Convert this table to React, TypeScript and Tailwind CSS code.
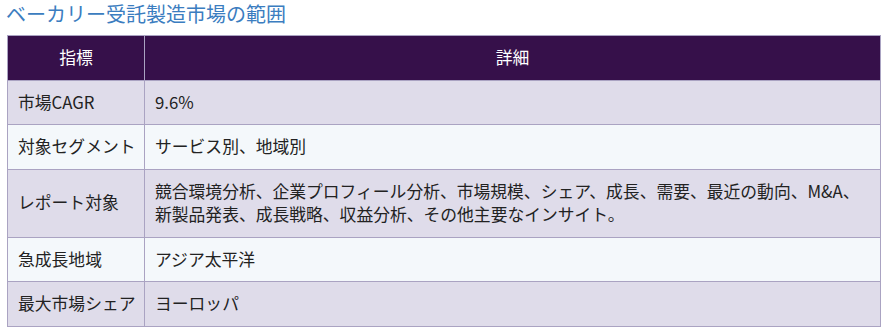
import React from "react";

const rows: [string, string][] = [
  ["市場CAGR", "9.6%"],
  ["対象セグメント", "サービス別、地域別"],
  [
    "レポート対象",
    "競合環境分析、企業プロフィール分析、市場規模、シェア、成長、需要、最近の動向、M&A、新製品発表、成長戦略、収益分析、その他主要なインサイト。",
  ],
  ["急成長地域", "アジア太平洋"],
  ["最大市場シェア", "ヨーロッパ"],
];

export default function App() {
  return (
    <div
      className="w-[889px] h-[331px] bg-white overflow-hidden pl-[7px]"
      style={{ fontFamily: '"Noto Sans CJK JP", "Noto Sans", sans-serif' }}
    >
      <h2 className="text-[20px] leading-[28px] text-[#3b7dc0] font-normal pt-[0px] mb-[7px] -ml-[1px]">
        ベーカリー受託製造市場の範囲
      </h2>
      <table className="w-[874px] border-collapse text-[16.8px] leading-[23.5px] text-[#222]">
        <thead>
          <tr className="bg-[#36104a] text-white">
            <th className="w-[137px] border border-[#aaa3c2] py-[10px] font-normal text-center">
              指標
            </th>
            <th className="border border-[#aaa3c2] py-[10px] font-normal text-center">
              詳細
            </th>
          </tr>
        </thead>
        <tbody>
          {rows.map(([k, v], i) => (
            <tr key={k} className={i % 2 === 0 ? "bg-[#dfdcea]" : "bg-[#f4f8fb]"}>
              <td className="border border-[#aaa3c2] py-[10px] pl-[10px] pr-[6px] whitespace-nowrap">
                {k}
              </td>
              <td className="border border-[#aaa3c2] py-[10px] pl-[10px] pr-[8px]">
                {v}
              </td>
            </tr>
          ))}
        </tbody>
      </table>
    </div>
  );
}
